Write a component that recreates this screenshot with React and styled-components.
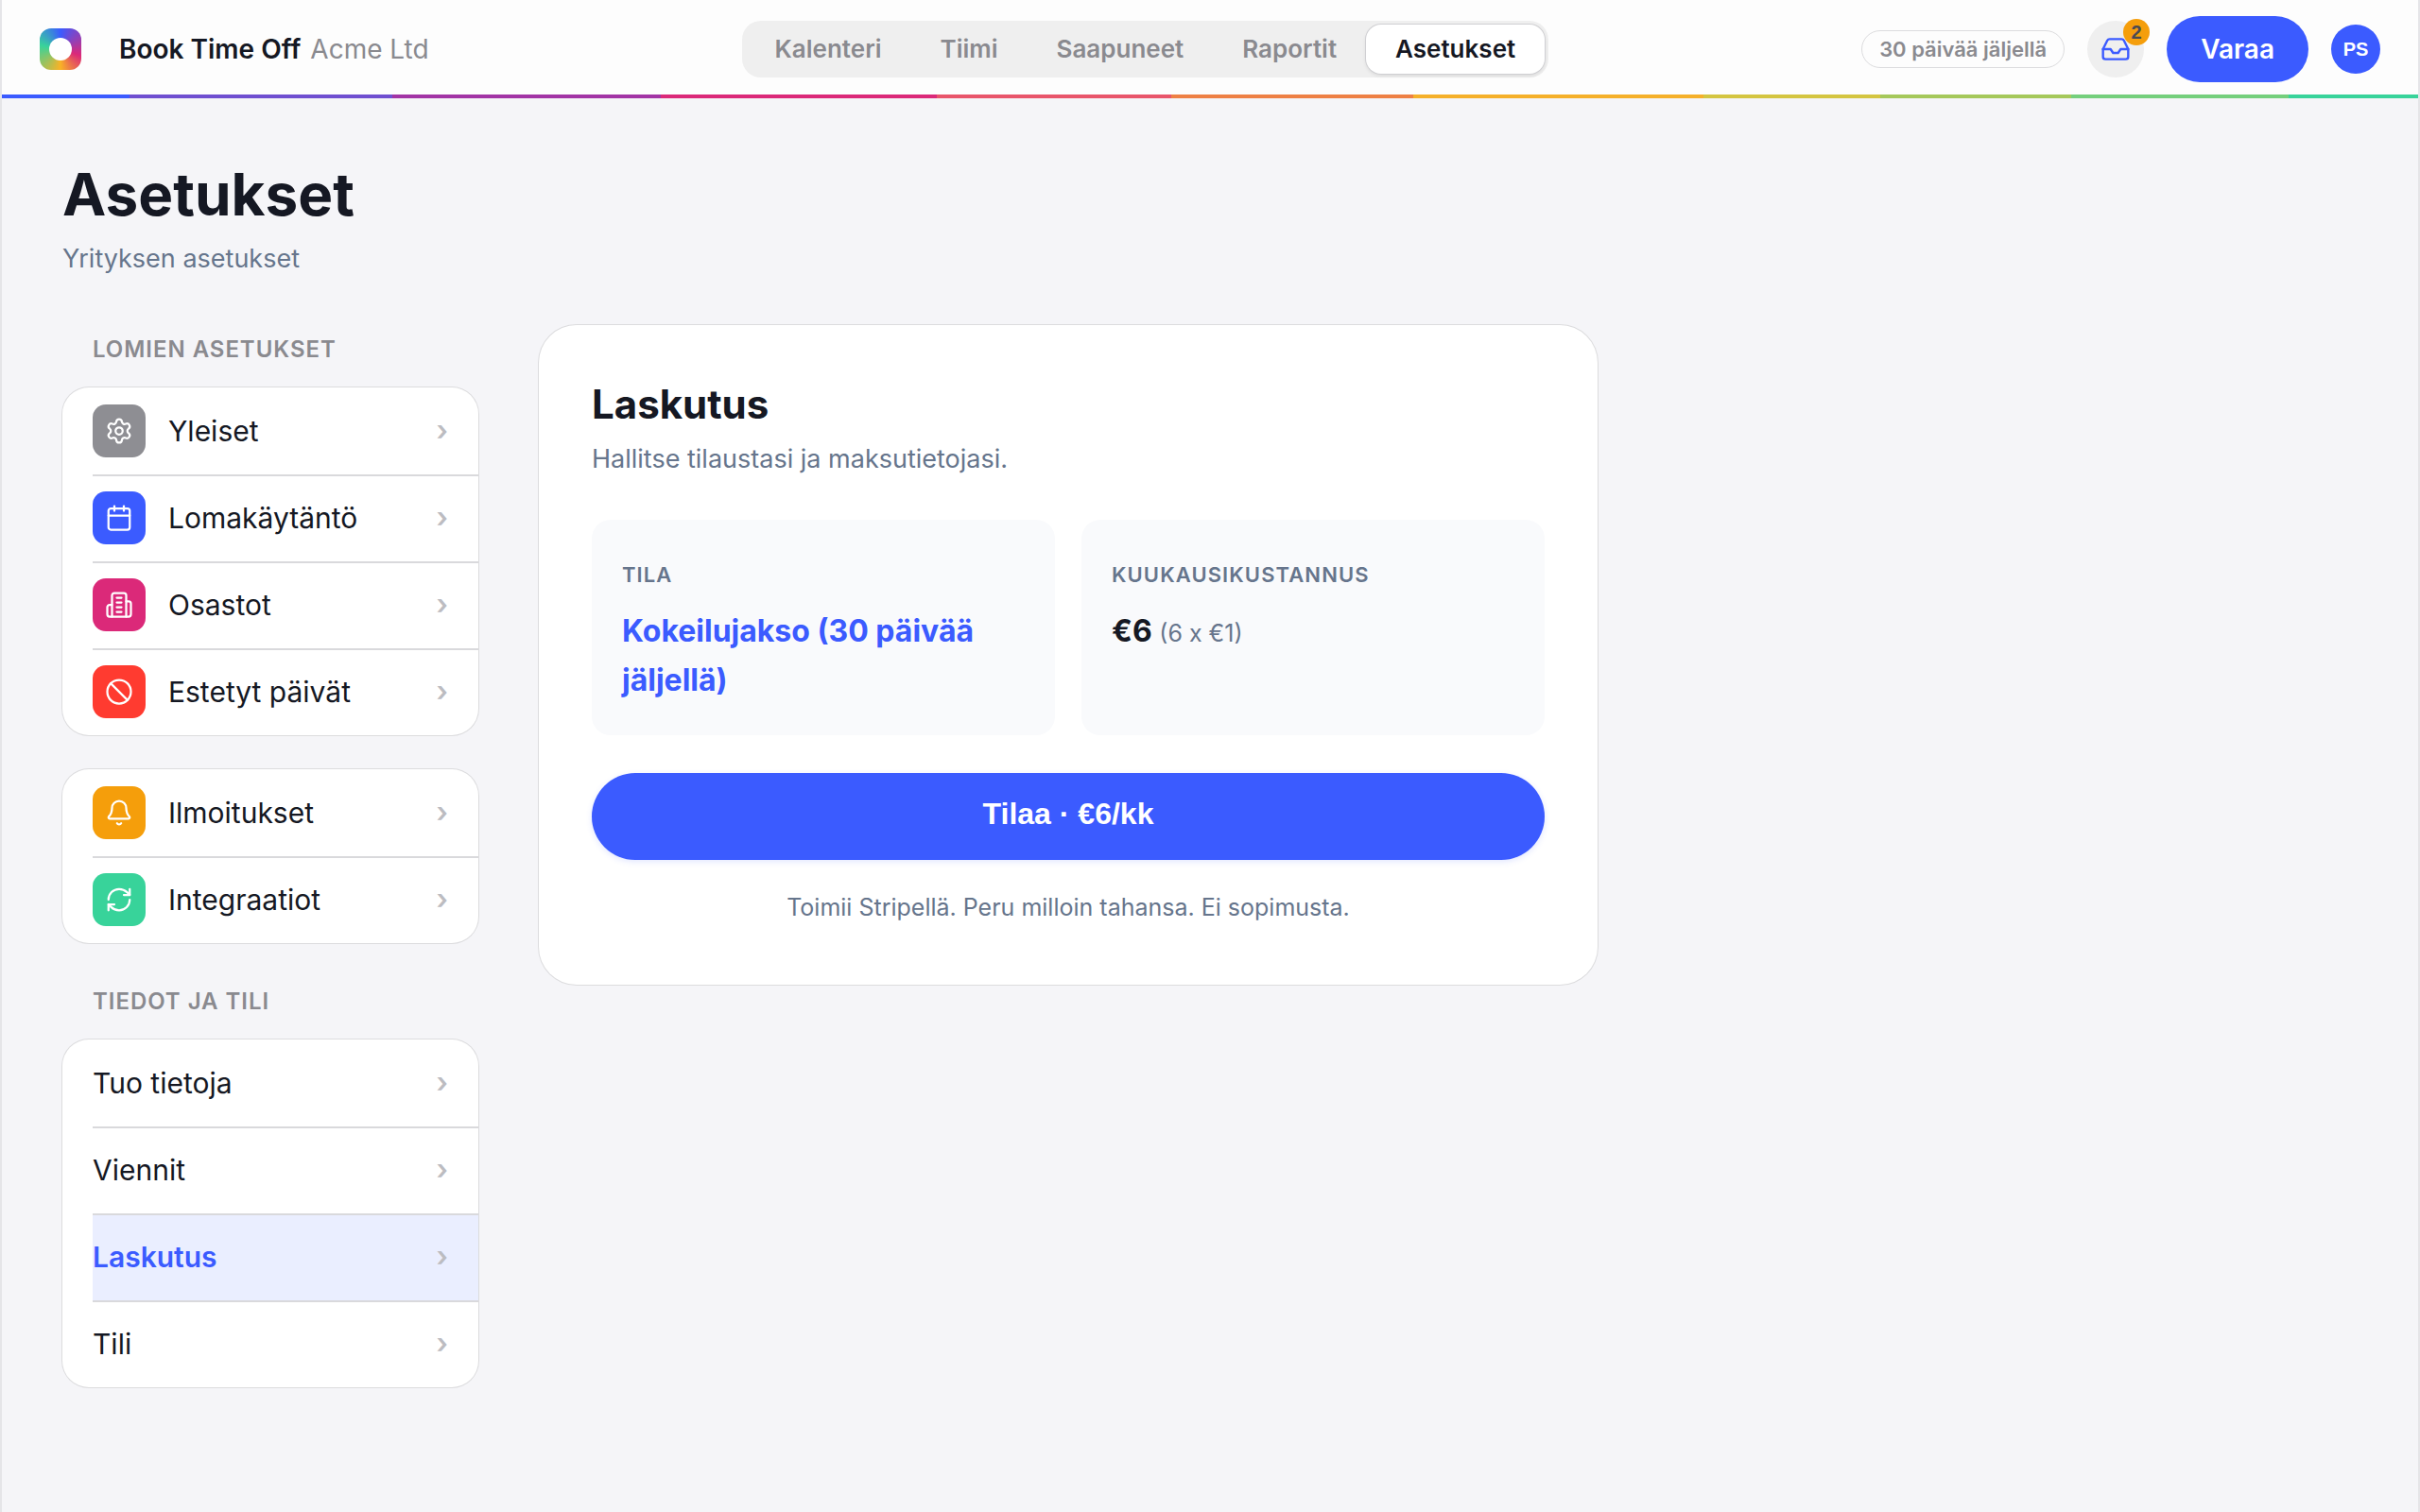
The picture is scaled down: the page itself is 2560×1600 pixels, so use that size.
import React from "react";
import styled, { createGlobalStyle } from "styled-components";
import { Settings, Calendar, Ban, Bell, RefreshCw, Inbox } from "lucide-react";

const ink = "#151823";
const blue = "#3b5bff";
const slate = "#66758c";
const grey = "#8a8a8f";
const inter = 'Inter, "Liberation Sans", sans-serif';
const arial = '"Liberation Sans", Arial, sans-serif';

const GlobalStyle = createGlobalStyle`
  *, *::before, *::after { box-sizing: border-box; }
  body { margin: 0; background: #f5f5f8; color: ${ink}; font-family: ${inter}; }
  h1, h2, p, ul, dl, dd { margin: 0; padding: 0; }
  ul { list-style: none; }
  a { color: inherit; text-decoration: none; }
  button { border: 0; cursor: pointer; }
`;

const Page = styled.div`
  min-height: 100vh;
  border: solid #e5e5e8;
  border-width: 0 2px;
`;

const Header = styled.header`
  display: flex;
  align-items: center;
  justify-content: space-between;
  height: 104px;
  padding: 4px 40px 0;
  background: #fdfdfd;
  border-bottom: 4px solid;
  border-image: linear-gradient(
    90deg,
    #3b5bff 0 5.3%,
    #6f4fd0 5.3% 16.2%,
    #a234a5 16.2% 27.3%,
    #db2979 27.3% 38.7%,
    #e8556a 38.7% 48.4%,
    #ee8044 48.4% 58.4%,
    #f5b02a 58.4% 70.4%,
    #d4c540 70.4% 77.7%,
    #a5c85a 77.7% 85.6%,
    #74cf7c 85.6% 94.6%,
    #38d39a 94.6%
  ) 1;
`;

const Brand = styled.a`
  display: flex;
  align-items: center;
  font-size: 28px;
  font-weight: 600;
`;

const Logo = styled.span`
  display: grid;
  place-items: center;
  width: 44px;
  height: 44px;
  margin-right: 40px;
  border-radius: 12px;
  background: conic-gradient(#3b5bff, #db2979 30%, #f9b226 50%, #38d39a 78%, #3b5bff);

  &::after {
    content: "";
    width: 24px;
    height: 24px;
    border-radius: 50%;
    background: #fff;
  }
`;

const Company = styled.span`
  margin-left: 10px;
  color: ${grey};
  font-weight: 400;
`;

const Tabs = styled.nav`
  display: flex;
  padding: 4px;
  border-radius: 20px;
  background: #efefef;
`;

const Tab = styled.a`
  padding: 0 31px;
  border-radius: 16px;
  color: ${({ $active }) => ($active ? ink : grey)};
  background: ${({ $active }) => ($active ? "#fff" : "transparent")};
  box-shadow: ${({ $active }) => ($active ? "0 0 0 1px #d0d0d3, 0 2px 4px rgba(0, 0, 0, 0.1)" : "none")};
  font-size: 26px;
  font-weight: 600;
  line-height: 52px;
`;

const Actions = styled.div`
  display: flex;
  align-items: center;
  gap: 24px;
`;

const DaysLeft = styled.span`
  padding: 0 18px;
  border: 1px solid #dcdcde;
  border-radius: 20px;
  color: ${grey};
  font-size: 22px;
  font-weight: 600;
  line-height: 38px;
`;

const InboxButton = styled.button`
  position: relative;
  display: grid;
  place-items: center;
  width: 60px;
  height: 60px;
  padding: 0;
  border-radius: 50%;
  color: ${blue};
  background: #efefef;
`;

const Badge = styled.span`
  position: absolute;
  top: -2px;
  right: -6px;
  width: 28px;
  border-radius: 14px;
  color: #4a4a52;
  background: #f59e0b;
  font: 700 20px/28px ${arial};
  text-align: center;
`;

const BookButton = styled.button`
  height: 70px;
  padding: 0 36px;
  border-radius: 35px;
  color: #fff;
  background: ${blue};
  font: 600 28px ${inter};
`;

const Avatar = styled.button`
  width: 52px;
  height: 52px;
  padding: 0;
  border-radius: 50%;
  color: #fff;
  background: ${blue};
  font: 700 20px ${arial};
`;

const Main = styled.main`
  padding: 64px 64px 120px;
`;

const Title = styled.h1`
  font-size: 62px;
  font-weight: 700;
  line-height: 76px;
`;

const Lead = styled.p`
  margin-top: 10px;
  color: ${slate};
  font-size: 27px;
  line-height: 40px;
`;

const Columns = styled.div`
  display: grid;
  grid-template-columns: 440px minmax(0, 1120px);
  gap: 64px;
  align-items: start;
  margin-top: 50px;
`;

const Menu = styled.nav`
  display: flex;
  flex-direction: column;
`;

const GroupLabel = styled.h2`
  padding: 10px 32px 24px;
  color: ${grey};
  font-size: 24px;
  font-weight: 600;
  line-height: 32px;
  letter-spacing: 0.04em;
  text-transform: uppercase;
`;

const Group = styled.ul`
  margin-bottom: 36px;
  padding-left: 32px;
  border-radius: 28px;
  background: #fff;
  box-shadow: 0 0 0 1px #dcdcde;
  overflow: hidden;
`;

const Item = styled.a`
  display: flex;
  align-items: center;
  gap: 24px;
  height: 92px;
  padding-right: 32px;
  color: ${({ $active }) => ($active ? blue : ink)};
  background: ${({ $active }) => ($active ? "#eaeeff" : "transparent")};
  font-size: 30px;
  font-weight: ${({ $active }) => ($active ? 600 : 400)};

  li + li > & {
    box-shadow: inset 0 2px #d9d9dc;
  }
`;

const Tile = styled.span`
  display: grid;
  place-items: center;
  width: 56px;
  height: 56px;
  border-radius: 14px;
  color: #fff;
  background: ${({ $color }) => $color};
`;

const Chevron = styled.span`
  margin-left: auto;
  padding-bottom: 2px;
  color: #bcbcc1;
  font-weight: 600;
`;

const Panel = styled.section`
  padding: 56px 56px 62px;
  border-radius: 40px;
  background: #fff;
  box-shadow: 0 0 0 1px #dcdcde;
`;

const PanelTitle = styled.h2`
  font-size: 42px;
  font-weight: 700;
  line-height: 56px;
`;

const Stats = styled.dl`
  display: grid;
  grid-template-columns: 1fr 1fr;
  gap: 28px;
  margin: 44px 0 40px;
`;

const Stat = styled.div`
  padding: 40px 32px 32px;
  border-radius: 20px;
  background: #f9fafc;
`;

const StatLabel = styled.dt`
  color: ${slate};
  font-size: 22px;
  font-weight: 600;
  line-height: 36px;
  letter-spacing: 0.05em;
  text-transform: uppercase;
`;

const StatValue = styled.dd`
  margin-top: 16px;
  color: ${({ $accent }) => ($accent ? blue : ink)};
  font-size: 32px;
  font-weight: 700;
  line-height: 52px;

  small {
    color: ${slate};
    font-size: 25px;
    font-weight: 400;
  }
`;

const Subscribe = styled.button`
  width: 100%;
  height: 92px;
  padding: 0 0 6px;
  border-radius: 46px;
  color: #fff;
  background: ${blue};
  box-shadow: 0 2px 6px rgba(59, 91, 255, 0.15);
  font: 700 32px ${arial};
`;

const Note = styled.p`
  margin-top: 30px;
  color: ${slate};
  font-size: 25px;
  line-height: 40px;
  text-align: center;
`;

function Building({ size, strokeWidth, ...rest }) {
  return (
    <svg
      width={size}
      height={size}
      viewBox="0 0 24 24"
      fill="none"
      stroke="currentColor"
      strokeWidth={strokeWidth}
      strokeLinecap="round"
      strokeLinejoin="round"
      {...rest}
    >
      <path d="M6 22V4a2 2 0 0 1 2-2h8a2 2 0 0 1 2 2v18Z" />
      <path d="M6 12H4a2 2 0 0 0-2 2v6a2 2 0 0 0 2 2h2" />
      <path d="M18 9h2a2 2 0 0 1 2 2v9a2 2 0 0 1-2 2h-2" />
      <path d="M10 6h4M10 10h4M10 14h4M10 18h4" />
    </svg>
  );
}

const tabs = ["Kalenteri", "Tiimi", "Saapuneet", "Raportit", "Asetukset"];

const groups = [
  {
    label: "Lomien asetukset",
    items: [
      { name: "Yleiset", icon: Settings, color: "#8e8e93" },
      { name: "Lomakäytäntö", icon: Calendar, color: blue },
      { name: "Osastot", icon: Building, color: "#db2979" },
      { name: "Estetyt päivät", icon: Ban, color: "#ff3b30" },
    ],
  },
  {
    items: [
      { name: "Ilmoitukset", icon: Bell, color: "#f59e0b" },
      { name: "Integraatiot", icon: RefreshCw, color: "#38d39a" },
    ],
  },
  {
    label: "Tiedot ja tili",
    items: [{ name: "Tuo tietoja" }, { name: "Viennit" }, { name: "Laskutus" }, { name: "Tili" }],
  },
];

function MenuItem({ name, icon: Icon, color }) {
  const active = name === "Laskutus";
  return (
    <li>
      <Item href="#" $active={active} aria-current={active ? "page" : undefined}>
        {Icon && (
          <Tile $color={color}>
            <Icon size={30} strokeWidth={1.8} aria-hidden="true" />
          </Tile>
        )}
        {name}
        <Chevron aria-hidden="true">›</Chevron>
      </Item>
    </li>
  );
}

export default function App() {
  return (
    <Page>
      <GlobalStyle />
      <Header>
        <Brand href="#">
          <Logo />
          Book Time Off
          <Company>Acme Ltd</Company>
        </Brand>
        <Tabs>
          {tabs.map((tab) => (
            <Tab key={tab} href="#" $active={tab === "Asetukset"}>
              {tab}
            </Tab>
          ))}
        </Tabs>
        <Actions>
          <DaysLeft>30 päivää jäljellä</DaysLeft>
          <InboxButton aria-label="Saapuneet">
            <Inbox size={32} strokeWidth={1.8} aria-hidden="true" />
            <Badge>2</Badge>
          </InboxButton>
          <BookButton>Varaa</BookButton>
          <Avatar>PS</Avatar>
        </Actions>
      </Header>
      <Main>
        <Title>Asetukset</Title>
        <Lead>Yrityksen asetukset</Lead>
        <Columns>
          <Menu>
            {groups.map((group, index) => (
              <React.Fragment key={index}>
                {group.label && <GroupLabel>{group.label}</GroupLabel>}
                <Group>
                  {group.items.map((item) => (
                    <MenuItem key={item.name} {...item} />
                  ))}
                </Group>
              </React.Fragment>
            ))}
          </Menu>
          <Panel>
            <PanelTitle>Laskutus</PanelTitle>
            <Lead>Hallitse tilaustasi ja maksutietojasi.</Lead>
            <Stats>
              <Stat>
                <StatLabel>Tila</StatLabel>
                <StatValue $accent>Kokeilujakso (30 päivää jäljellä)</StatValue>
              </Stat>
              <Stat>
                <StatLabel>Kuukausikustannus</StatLabel>
                <StatValue>
                  €6 <small>(6 x €1)</small>
                </StatValue>
              </Stat>
            </Stats>
            <Subscribe>Tilaa · €6/kk</Subscribe>
            <Note>Toimii Stripellä. Peru milloin tahansa. Ei sopimusta.</Note>
          </Panel>
        </Columns>
      </Main>
    </Page>
  );
}
